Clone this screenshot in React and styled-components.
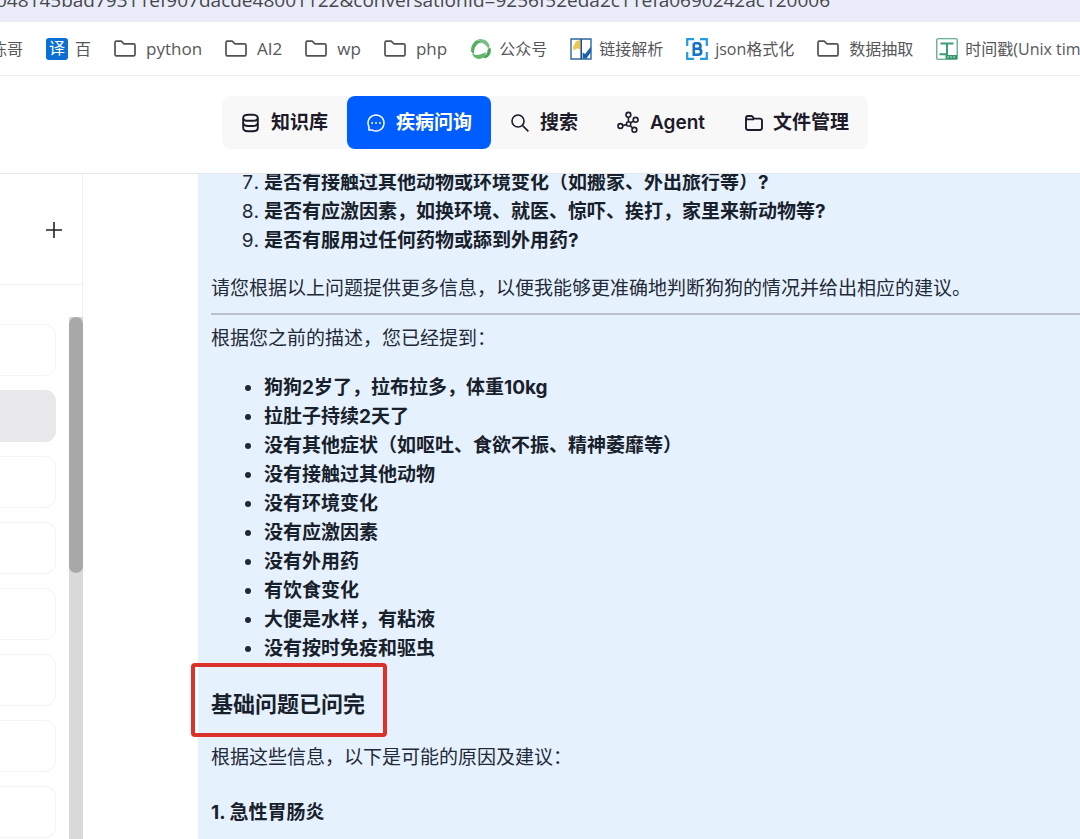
import React from 'react';
import styled, { createGlobalStyle, css } from 'styled-components';
import { AiOutlineMessage } from 'react-icons/ai';

const GlobalStyle = createGlobalStyle`
  * {
    box-sizing: border-box;
  }

  body {
    margin: 0;
    background-color: #fff;
    color: #1f2937;
    font-family: Inter, 'Noto Sans CJK SC', sans-serif;
    font-size: 19px;
  }
`;

const StyledPage = styled.div`
  display: flex;
  flex-direction: column;
  height: 100vh;
  overflow: hidden;
`;

const StyledAddress = styled.div`
  display: flex;
  align-items: flex-end;
  flex: none;
  height: 22px;
  overflow: hidden;
  background-color: #eaedf9;
  color: #46474b;
  font-family: 'Open Sans', sans-serif;
  font-size: 19px;
  line-height: 24px;
  white-space: nowrap;

  span {
    margin: 0 0 10px -4px;
  }
`;

const StyledBookmarks = styled.nav`
  display: flex;
  align-items: center;
  gap: 23px;
  flex: none;
  height: 54px;
  margin-left: -9px;
  overflow: hidden;
  border-bottom: 1px solid #ececee;
  white-space: nowrap;

  svg {
    display: block;
    width: 22px;
    height: 22px;
  }
`;

const StyledBookmark = styled.a`
  display: flex;
  align-items: center;
  flex: none;
  gap: ${({ $folder }) => ($folder ? '10px' : '7px')};
  color: #56575a;
  font-family: 'Open Sans', 'Noto Sans CJK SC', sans-serif;
  font-size: ${({ $latin }) => ($latin ? '17px' : '16px')};
  line-height: 24px;
  text-decoration: none;
`;

const StyledTranslate = styled.span`
  width: 22px;
  height: 22px;
  border-radius: 3px;
  background-color: #0b6fd3;
  color: #fff;
  font-size: 16px;
  line-height: 21px;
  text-align: center;
`;

const StyledHeader = styled.header`
  display: flex;
  align-items: center;
  justify-content: center;
  flex: none;
  height: 98px;
  padding: 0 0 4px 10px;
  border-bottom: 1px solid #e4e7eb;
`;

const StyledTabs = styled.nav`
  display: flex;
  border-radius: 8px;
  background-color: #f8f8f9;
`;

const StyledTab = styled.button`
  display: flex;
  align-items: center;
  gap: 10px;
  height: 53px;
  padding: 0 19px;
  border: 0;
  border-radius: 8px;
  background-color: transparent;
  color: #1d1b29;
  font-family: inherit;
  font-size: 19px;
  font-weight: 600;
  line-height: 28px;

  svg {
    width: 20px;
    height: 20px;
  }

  ${({ $active }) =>
    $active &&
    css`
      background-color: #005dff;
      color: #fff;
    `};
`;

const StyledBody = styled.div`
  display: flex;
  flex: 1;
  min-height: 0;
`;

const StyledSidebar = styled.aside`
  display: flex;
  flex-direction: column;
  flex: none;
  width: 83px;
  border-right: 1px solid #f0f0f1;
`;

const StyledSidebarTop = styled.div`
  display: flex;
  align-items: center;
  justify-content: flex-end;
  flex: none;
  height: 111px;
  padding: 2px 19px 0 0;
  border-bottom: 1px solid #eeeeef;

  button {
    display: flex;
    padding: 0;
    border: 0;
    background: none;
    color: #222;
  }
`;

const StyledScroll = styled.div`
  display: flex;
  justify-content: space-between;
  flex: 1;
  min-height: 0;
  margin: 32px -1px 0 0;
`;

const StyledHistory = styled.ul`
  display: flex;
  flex-direction: column;
  gap: 14px;
  width: 56px;
  margin: 0;
  padding: 7px 0 0;
  overflow: hidden;
  list-style: none;
`;

const StyledCard = styled.li`
  flex: none;
  height: 52px;
  border: 1px solid ${({ $selected }) => ($selected ? '#e8e8ea' : '#f4f4f5')};
  border-left: 0;
  border-radius: 0 11px 11px 0;
  background-color: ${({ $selected }) => ($selected ? '#e8e8ea' : '#fff')};
`;

const StyledTrack = styled.div`
  width: 14px;
  background-color: #dadada;

  div {
    height: 49%;
    border-radius: 7px;
    background-color: #a8a8a8;
  }
`;

const StyledMain = styled.main`
  display: flex;
  flex: 1;
  padding-left: 115px;
  overflow: hidden;
`;

const StyledMessage = styled.article`
  flex: 1;
  padding-left: 13px;
  background-color: #e6f1fe;
  line-height: 29px;

  p,
  h4 {
    margin: 0;
    font-size: 19px;
  }

  strong,
  h4 {
    color: #18212b;
    font-weight: 700;
  }

  h4 {
    margin-top: 26px;
  }

  ol,
  ul {
    margin: 0 0 19px;
    padding-left: 53px;
  }

  ol {
    margin-top: -6px;
  }

  ul {
    margin: 20px 0 24px;
  }

  hr {
    margin: 10px 0 9px;
    border: 0;
    border-top: 2px solid #bcc2cc;
  }
`;

const StyledMarkedTitle = styled.h3`
  position: relative;
  width: fit-content;
  margin: 0 0 22px;
  color: #18212b;
  font-size: 22px;
  font-weight: 700;
  line-height: 34px;

  &:after {
    content: '';
    position: absolute;
    inset: -24px -22px -16px -20px;
    border: 4px solid #dc302b;
    border-radius: 4px;
  }
`;

const FolderIcon = () => (
  <svg viewBox="0 0 22 22" fill="none" stroke="#505154" strokeWidth="1.7" strokeLinejoin="round">
    <path d="M1 4.6Q1 3.2 2.4 3.2H7.2L10 5.8H19.6Q21 5.8 21 7.2V16.4Q21 17.8 19.6 17.8H2.4Q1 17.8 1 16.4Z" />
  </svg>
);

const SwirlIcon = () => (
  <svg viewBox="0 0 22 22">
    <path d="M6 2.4Q0.4 7 1 13.4L4.2 16.4Q3.2 9 8.6 5.2L12 4.4Q9.5 2 6 2.4Z" fill="#55ae64" />
    <path d="M7.4 1.4Q16 -0.6 19.6 7.4L18.4 11.6Q16.6 6.2 11.4 4.8Z" fill="#79bf83" />
    <path d="M20.4 9.4Q22.4 17 15.6 20.2L12.2 19.2Q18 16.8 17.6 11.4Z" fill="#4aa65a" />
    <path d="M1.8 15.4Q7 18.4 12.8 15.6L16.2 14.2Q14.6 20.8 9 21Q4 20.6 1.8 15.4Z" fill="#63b671" />
  </svg>
);

const LinkIcon = () => (
  <svg viewBox="0 0 22 22">
    <path d="M1 1H21V21H1Z" fill="#fff" stroke="#2d689f" strokeWidth="1.4" />
    <path d="M3 8.5Q5.4 6.8 5.6 3.4L10 2V11.6L7.4 10.2L3.6 12.4Z" fill="#e9c750" />
    <path d="M11.2 1V21" stroke="#214f7b" strokeWidth="1.6" />
    <path d="M12.6 14.4L15.2 16L21 8.6V14L16.4 20.6H12.6Z" fill="#1760a7" />
  </svg>
);

const JsonIcon = () => (
  <svg viewBox="0 0 22 22" fill="none" stroke="#249be5" strokeWidth="2.2">
    <path d="M8 1.2H1.2V8M14 1.2H20.8V8M8 20.8H1.2V14M14 20.8H20.8V14" />
    <path
      d="M7.8 5.2V16.8H12Q15.2 16.8 15.2 13.8T12 10.8H8M7.8 5.2H11.7Q14.5 5.2 14.5 8T11.7 10.8"
      stroke="#1473c5"
      strokeWidth="2.6"
    />
  </svg>
);

const ToolIcon = () => (
  <svg viewBox="0 0 22 22" fill="none" stroke="#3c9c73">
    <rect x="0.8" y="0.8" width="20.4" height="20.4" rx="1" strokeWidth="1.1" />
    <path d="M4.5 5.5H17.5M11 5.5V16M3.5 16.2H12" strokeWidth="2" />
    <path d="M9.5 17H21V21H9.5Z" fill="#36966b" stroke="none" />
    <path d="M11 19H19.5" stroke="#b9dfce" strokeDasharray="2 1" />
  </svg>
);

const DatabaseIcon = () => (
  <svg viewBox="0 0 20 20" fill="none" stroke="currentColor" strokeWidth="1.9">
    <path d="M2.2 5Q2.2 1.8 7 1.8H12Q16.8 1.8 16.8 5V15Q16.8 18.2 12 18.2H7Q2.2 18.2 2.2 15Z" />
    <path d="M2.2 5.4Q2.8 7.8 7 7.8H12Q16.2 7.8 16.8 5.4M2.2 10.6Q2.8 13 7 13H12Q16.2 13 16.8 10.6" />
  </svg>
);

const SearchIcon = () => (
  <svg viewBox="0 0 20 20" fill="none" stroke="currentColor" strokeWidth="1.6">
    <circle cx="8" cy="8" r="6" />
    <path d="M12.4 12.4L18.4 18.4" />
  </svg>
);

const StyledAgentIcon = styled.svg`
  && {
    width: 24px;
    height: 24px;
  }
`;

const AgentIcon = () => (
  <StyledAgentIcon viewBox="0 0 24 24" fill="none" stroke="currentColor" strokeWidth="1.6">
    <circle cx="12.4" cy="3.8" r="2.4" />
    <circle cx="4.4" cy="15" r="2.4" />
    <circle cx="19.6" cy="8.8" r="2.4" />
    <circle cx="18.4" cy="18.8" r="2.4" />
    <rect x="10.6" y="11" width="4" height="4" rx="1" />
    <path d="M12.4 6.2V11M6.8 14.5L10.6 13.6M14.6 11.8L17.5 10.1M14.4 14.8L16.7 17" />
  </StyledAgentIcon>
);

const FilesIcon = () => (
  <svg viewBox="0 0 20 20" fill="none" stroke="currentColor" strokeWidth="1.9" strokeLinejoin="round">
    <path d="M3 5.2Q3 3 5.2 3H8Q9 3 9.6 3.8L11 5.6H16.8Q19 5.6 19 7.8V14.8Q19 17 16.8 17H5.2Q3 17 3 14.8ZM3 6.4H11" />
  </svg>
);

const PlusIcon = () => (
  <svg width="18" height="18" viewBox="0 0 18 18" stroke="currentColor" strokeWidth="1.6">
    <path d="M9 1V17M1 9H17" />
  </svg>
);

const bookmarks = [
  { name: '陈哥' },
  { name: '百', icon: <StyledTranslate>译</StyledTranslate> },
  { name: 'python', folder: true, latin: true },
  { name: 'AI2', folder: true, latin: true },
  { name: 'wp', folder: true, latin: true },
  { name: 'php', folder: true, latin: true },
  { name: '公众号', icon: <SwirlIcon /> },
  { name: '链接解析', icon: <LinkIcon /> },
  { name: 'json格式化', icon: <JsonIcon /> },
  { name: '数据抽取', folder: true },
  { name: '时间戳(Unix timestamp)', icon: <ToolIcon /> },
];

const tabs = [
  { name: '知识库', icon: <DatabaseIcon /> },
  { name: '疾病问询', icon: <AiOutlineMessage />, active: true },
  { name: '搜索', icon: <SearchIcon /> },
  { name: 'Agent', icon: <AgentIcon /> },
  { name: '文件管理', icon: <FilesIcon /> },
];

const questions = [
  '是否有接触过其他动物或环境变化（如搬家、外出旅行等）?',
  '是否有应激因素，如换环境、就医、惊吓、挨打，家里来新动物等?',
  '是否有服用过任何药物或舔到外用药?',
];

const facts = [
  '狗狗2岁了，拉布拉多，体重10kg',
  '拉肚子持续2天了',
  '没有其他症状（如呕吐、食欲不振、精神萎靡等）',
  '没有接触过其他动物',
  '没有环境变化',
  '没有应激因素',
  '没有外用药',
  '有饮食变化',
  '大便是水样，有粘液',
  '没有按时免疫和驱虫',
];

const App = () => (
  <StyledPage>
    <GlobalStyle />

    <StyledAddress>
      <span>048145bad79311ef907dacde48001122&amp;conversationId=9256f52eda2c11efa0690242ac120006</span>
    </StyledAddress>

    <StyledBookmarks>
      {bookmarks.map(({ name, icon, folder, latin }) => (
        <StyledBookmark href="#" key={name} $folder={folder} $latin={latin}>
          {folder ? <FolderIcon /> : icon}
          {name}
        </StyledBookmark>
      ))}
    </StyledBookmarks>

    <StyledHeader>
      <StyledTabs>
        {tabs.map(({ name, icon, active }) => (
          <StyledTab type="button" key={name} $active={active}>
            {icon}
            {name}
          </StyledTab>
        ))}
      </StyledTabs>
    </StyledHeader>

    <StyledBody>
      <StyledSidebar>
        <StyledSidebarTop>
          <button type="button">
            <PlusIcon />
          </button>
        </StyledSidebarTop>
        <StyledScroll>
          <StyledHistory>
            {[...Array(8)].map((_, i) => (
              <StyledCard key={i} $selected={i === 1} />
            ))}
          </StyledHistory>
          <StyledTrack>
            <div />
          </StyledTrack>
        </StyledScroll>
      </StyledSidebar>

      <StyledMain>
        <StyledMessage>
          <ol start="7">
            {questions.map((q, i) => (
              <li key={i}>
                <strong>{q}</strong>
              </li>
            ))}
          </ol>
          <p>请您根据以上问题提供更多信息，以便我能够更准确地判断狗狗的情况并给出相应的建议。</p>
          <hr />
          <p>根据您之前的描述，您已经提到：</p>
          <ul>
            {facts.map((fact, i) => (
              <li key={i}>
                <strong>{fact}</strong>
              </li>
            ))}
          </ul>
          <StyledMarkedTitle>基础问题已问完</StyledMarkedTitle>
          <p>根据这些信息，以下是可能的原因及建议：</p>
          <h4>1. 急性胃肠炎</h4>
        </StyledMessage>
      </StyledMain>
    </StyledBody>
  </StyledPage>
);

export default App;
